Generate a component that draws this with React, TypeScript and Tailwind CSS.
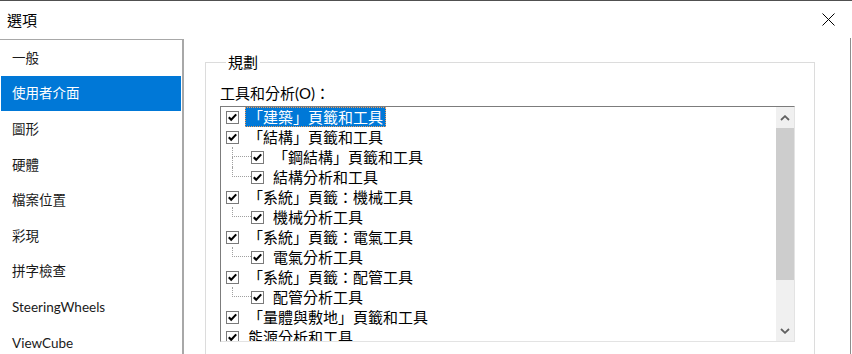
import React from 'react';

const FONT = "font-['Lato','Noto_Sans_CJK_TC',sans-serif]";

const navItems = ['一般', '使用者介面', '圖形', '硬體', '檔案位置', '彩現', '拼字檢查', 'SteeringWheels', 'ViewCube'];

type Row = { label: string; level: 0 | 1; last?: boolean; selected?: boolean };

const rows: Row[] = [
  { label: '「建築」頁籤和工具', level: 0, selected: true },
  { label: '「結構」頁籤和工具', level: 0 },
  { label: '「鋼結構」頁籤和工具', level: 1 },
  { label: '結構分析和工具', level: 1, last: true },
  { label: '「系統」頁籤：機械工具', level: 0 },
  { label: '機械分析工具', level: 1, last: true },
  { label: '「系統」頁籤：電氣工具', level: 0 },
  { label: '電氣分析工具', level: 1, last: true },
  { label: '「系統」頁籤：配管工具', level: 0 },
  { label: '配管分析工具', level: 1, last: true },
  { label: '「量體與敷地」頁籤和工具', level: 0 },
  { label: '能源分析和工具', level: 0 },
];

function CheckBox() {
  return (
    <div className="w-[13px] h-[13px] shrink-0 border border-[#7a7a7a] bg-white flex items-center justify-center">
      <svg width="11" height="11" viewBox="0 0 11 11">
        <path d="M1.8 5.2 L4.2 7.8 L9.2 2.4" stroke="#000" strokeWidth="2.1" fill="none" />
      </svg>
    </div>
  );
}

function Chevron({ up }: { up?: boolean }) {
  return (
    <svg width="10" height="6" viewBox="0 0 10 6">
      <path d={up ? 'M1 5 L5 1.2 L9 5' : 'M1 1 L5 4.8 L9 1'} stroke="#606060" strokeWidth="1.8" fill="none" />
    </svg>
  );
}

function TreeRow({ row }: { row: Row }) {
  return (
    <div className={`h-[20px] flex items-center ${row.level === 0 ? 'pl-[5px]' : 'pl-[11px]'}`}>
      {row.level === 1 && (
        <div className="w-[19px] h-full flex flex-col shrink-0">
          <div className="h-[10px] border-l border-b border-dotted border-[#a0a0a0]" />
          {!row.last && <div className="h-[10px] border-l border-dotted border-[#a0a0a0]" />}
        </div>
      )}
      <CheckBox />
      <div
        className={`ml-[6px] h-full flex items-center px-[2px] border border-dotted whitespace-nowrap text-[15px] leading-[18px] ${
          row.selected ? 'bg-[#0078d7] text-white border-[#f0a060]' : 'text-black border-transparent'
        }`}
      >
        {row.label}
      </div>
    </div>
  );
}

export default function App() {
  return (
    <div className={`w-[852px] h-[354px] bg-white overflow-hidden border-t border-[#505050] flex flex-col ${FONT}`}>
      <div className="h-[37px] shrink-0 flex items-center justify-between pl-[7px] pr-[17px]">
        <span className="text-[15px] leading-[20px] text-black">選項</span>
        <svg width="13" height="13" viewBox="0 0 13 13">
          <path d="M0.5 0.5 L12.5 12.5 M12.5 0.5 L0.5 12.5" stroke="#000" strokeWidth="1" />
        </svg>
      </div>

      <div className="flex flex-1 min-h-0">
        <nav className="w-[184px] shrink-0 mt-[1px] border-t border-r-2 border-[#a8a8a8]">
          {navItems.map((item, i) => (
            <div
              key={item}
              className={`h-[35.6px] mx-[1px] flex items-center pl-[11px] text-[13.5px] leading-[18px] ${
                i === 1 ? 'bg-[#0078d7] text-white' : 'text-[#1a1a1a]'
              }`}
            >
              {item}
            </div>
          ))}
        </nav>

        <div className="flex-1 pl-[21px] pt-[14px]">
          <fieldset className="w-[610px] h-[320px] border border-[#dcdcdc] pl-[14px] pt-[11px]">
            <legend className="ml-[6px] px-[2px] text-[15px] leading-[20px] text-black">規劃</legend>
            <div className="text-[15px] leading-[20px] text-black">工具和分析(O)：</div>
            <div className="mt-[3px] w-[575px] h-[236px] border-t border-l border-t-[#7c7c7c] border-l-[#7c7c7c] border-r border-b border-r-[#e3e3e3] border-b-[#e3e3e3] flex">
              <div className="flex-1 overflow-hidden">
                {rows.map((r) => (
                  <TreeRow key={r.label} row={r} />
                ))}
              </div>
              <div className="w-[18px] bg-[#f0f0f0] flex flex-col">
                <div className="h-[21px] flex items-center justify-center">
                  <Chevron up />
                </div>
                <div className="h-[152px] bg-[#cdcdcd]" />
                <div className="flex-1" />
                <div className="h-[20px] flex items-center justify-center">
                  <Chevron />
                </div>
              </div>
            </div>
          </fieldset>
        </div>

        <div className="w-[1px] bg-[#8c8c8c] mr-[1px]" />
      </div>
    </div>
  );
}
